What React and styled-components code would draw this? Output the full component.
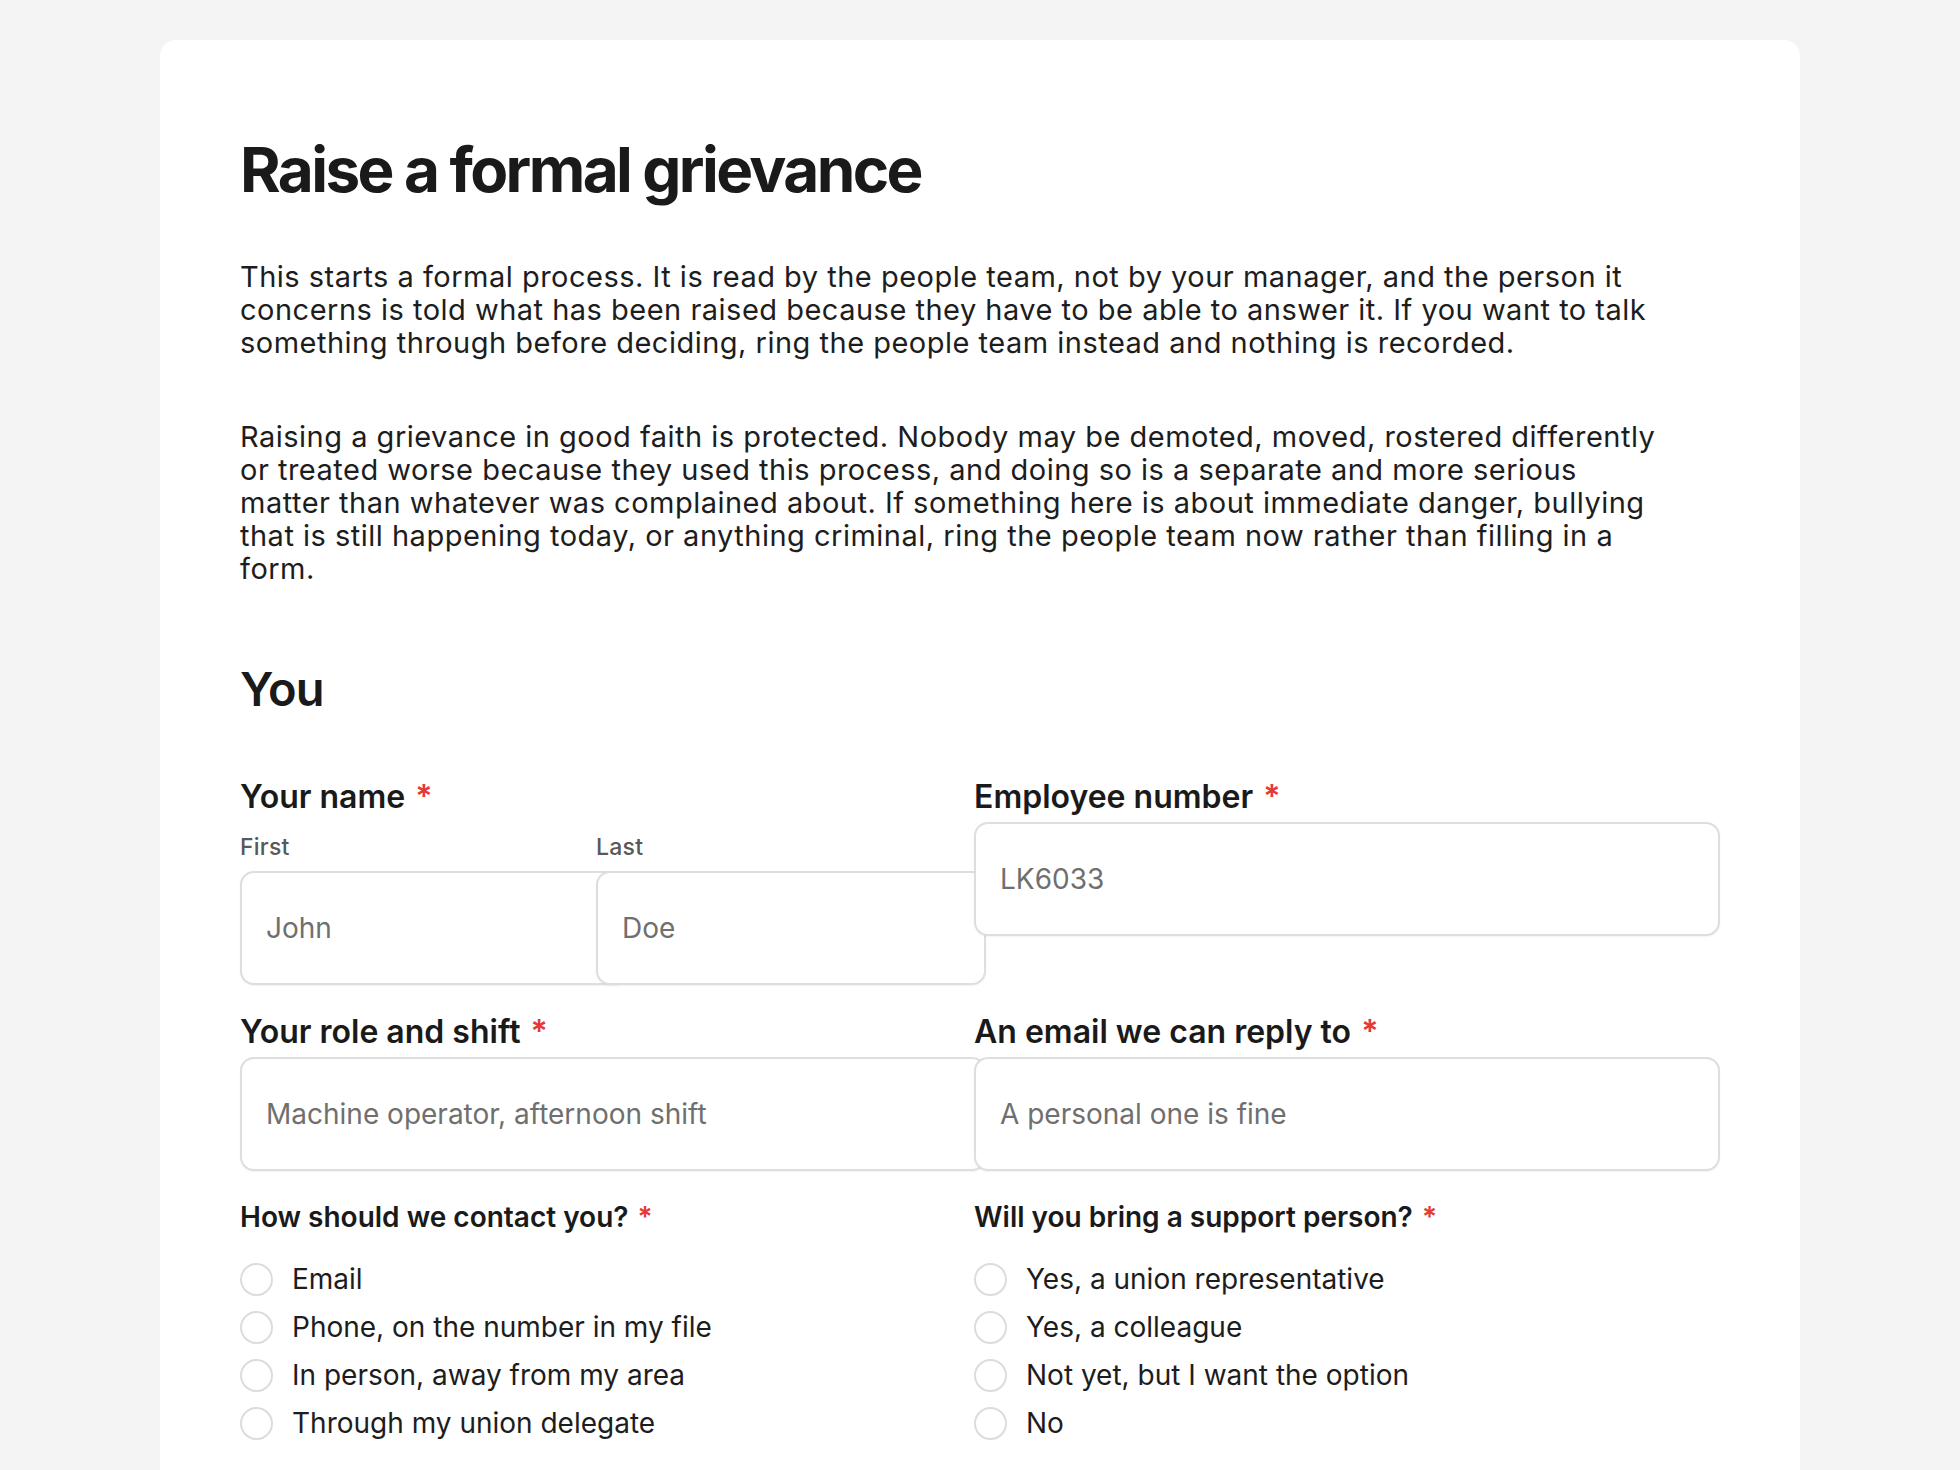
import React from "react";
import styled, { createGlobalStyle } from "styled-components";

const GlobalStyle = createGlobalStyle`
  html, body {
    margin: 0;
    padding: 0;
    background: #f4f4f4;
  }
  body {
    font-family: Inter, "Noto Sans", "Liberation Sans", sans-serif;
    color: #1c1c1c;
  }
  * {
    box-sizing: border-box;
  }
`;

const contactOptions = [
  "Email",
  "Phone, on the number in my file",
  "In person, away from my area",
  "Through my union delegate",
];

const supportOptions = [
  "Yes, a union representative",
  "Yes, a colleague",
  "Not yet, but I want the option",
  "No",
];

const App = () => {
  return (
    <>
      <GlobalStyle />
      <Page>
        <Card>
          <Content>
            <Title>Raise a formal grievance</Title>
            <Intro>
              This starts a formal process. It is read by the people team, not
              by your manager, and the person it concerns is told what has been
              raised because they have to be able to answer it. If you want to
              talk something through before deciding, ring the people team
              instead and nothing is recorded.
            </Intro>
            <Intro>
              Raising a grievance in good faith is protected. Nobody may be
              demoted, moved, rostered differently or treated worse because
              they used this process, and doing so is a separate and more
              serious matter than whatever was complained about. If something
              here is about immediate danger, bullying that is still happening
              today, or anything criminal, ring the people team now rather
              than filling in a form.
            </Intro>

            <SectionTitle>You</SectionTitle>

            <FormGrid>
              <Field>
                <Label>
                  Your name <Req>*</Req>
                </Label>
                <NameRow>
                  <SubField>
                    <SubLabel htmlFor="first">First</SubLabel>
                    <Input id="first" placeholder="John" />
                  </SubField>
                  <SubField>
                    <SubLabel htmlFor="last">Last</SubLabel>
                    <Input id="last" placeholder="Doe" />
                  </SubField>
                </NameRow>
              </Field>

              <Field>
                <Label htmlFor="emp">
                  Employee number <Req>*</Req>
                </Label>
                <Input id="emp" placeholder="LK6033" />
              </Field>

              <Field>
                <Label htmlFor="role">
                  Your role and shift <Req>*</Req>
                </Label>
                <Input id="role" placeholder="Machine operator, afternoon shift" />
              </Field>

              <Field>
                <Label htmlFor="email">
                  An email we can reply to <Req>*</Req>
                </Label>
                <Input id="email" placeholder="A personal one is fine" />
              </Field>

              <Group>
                <GroupLabel>
                  How should we contact you? <Req>*</Req>
                </GroupLabel>
                <OptionList>
                  {contactOptions.map((opt) => (
                    <Option key={opt}>
                      <Radio type="radio" name="contact" />
                      {opt}
                    </Option>
                  ))}
                </OptionList>
              </Group>

              <Group>
                <GroupLabel>
                  Will you bring a support person? <Req>*</Req>
                </GroupLabel>
                <OptionList>
                  {supportOptions.map((opt) => (
                    <Option key={opt}>
                      <Radio type="radio" name="support" />
                      {opt}
                    </Option>
                  ))}
                </OptionList>
              </Group>
            </FormGrid>
          </Content>
        </Card>
      </Page>
    </>
  );
};

export default App;

const Page = styled.div`
  padding: 40px 160px;
`;

const Card = styled.div`
  background: #ffffff;
  border-radius: 16px;
  padding: 92px 80px 80px;
`;

const Content = styled.div`
  max-width: 1428px;
`;

const Title = styled.h1`
  margin: 0;
  font-size: 62px;
  line-height: 76px;
  font-weight: 700;
  letter-spacing: -0.042em;
  color: #1a1a1a;
`;

const Intro = styled.p`
  margin: 52px 0 0;
  font-size: 29px;
  line-height: 33px;
  letter-spacing: 0.017em;
  color: #1d1d1d;

  & + & {
    margin-top: 61px;
  }
`;

const SectionTitle = styled.h2`
  margin: 76px 0 0;
  font-size: 47px;
  line-height: 56px;
  font-weight: 600;
  letter-spacing: -0.02em;
  color: #1a1a1a;
`;

const FormGrid = styled.div`
  margin-top: 62px;
  display: grid;
  grid-template-columns: 1fr 1fr;
  column-gap: 40px;
  row-gap: 29px;
`;

const Field = styled.div`
  display: flex;
  flex-direction: column;
  min-width: 0;
`;

const Label = styled.label`
  font-size: 32px;
  line-height: 36px;
  font-weight: 600;
  color: #1a1a1a;
  margin-bottom: 7px;
`;

const Req = styled.span`
  color: #e53935;
  margin-left: 2px;
`;

const NameRow = styled.div`
  display: grid;
  grid-template-columns: 1fr 1fr;
  column-gap: 18px;
  margin-top: 11px;
`;

const SubField = styled.div`
  display: flex;
  flex-direction: column;
  min-width: 0;
`;

const SubLabel = styled.label`
  font-size: 23px;
  line-height: 28px;
  font-weight: 500;
  letter-spacing: 0.01em;
  color: #585858;
  margin-bottom: 10px;
`;

const Input = styled.input`
  box-sizing: content-box;
  width: 100%;
  height: 110px;
  padding: 0 24px;
  border: 2px solid #dedede;
  border-radius: 14px;
  background: #fff;
  box-shadow: 0 1px 2px rgba(0, 0, 0, 0.05);
  font-family: inherit;
  font-size: 28px;
  color: #1c1c1c;
  outline: none;

  &::placeholder {
    color: #6f6f6f;
  }
`;

const Group = styled.div`
  display: flex;
  flex-direction: column;
`;

const GroupLabel = styled.div`
  font-size: 28px;
  line-height: 34px;
  font-weight: 600;
  color: #1a1a1a;
  margin-bottom: 21px;
`;

const OptionList = styled.div`
  display: flex;
  flex-direction: column;
`;

const Option = styled.label`
  display: flex;
  align-items: center;
  gap: 19px;
  height: 48px;
  font-size: 28px;
  color: #1d1d1d;
`;

const Radio = styled.input`
  appearance: none;
  margin: 0;
  width: 33px;
  height: 33px;
  border: 2px solid #dcdcdc;
  border-radius: 50%;
  background: #fff;
  flex-shrink: 0;
`;
